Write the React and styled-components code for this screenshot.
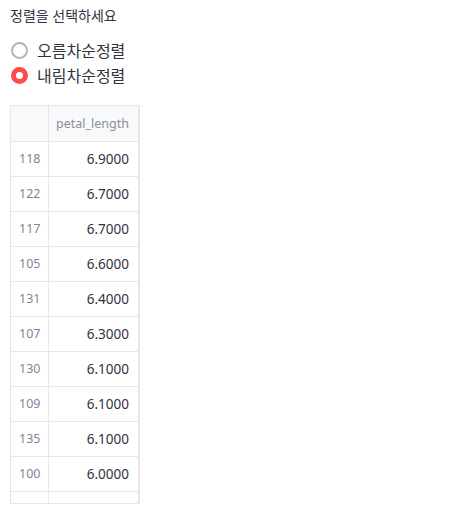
import React, { useState } from 'react';
import styled, { createGlobalStyle } from 'styled-components';

const GlobalStyle = createGlobalStyle`
  html, body {
    margin: 0;
    padding: 0;
    background: #ffffff;
  }
  body {
    font-family: "Noto Sans", "Noto Sans CJK KR", sans-serif;
    color: #31333f;
  }
`;

const data = [
  [118, '6.9000'],
  [122, '6.7000'],
  [117, '6.7000'],
  [105, '6.6000'],
  [131, '6.4000'],
  [107, '6.3000'],
  [130, '6.1000'],
  [109, '6.1000'],
  [135, '6.1000'],
  [100, '6.0000'],
];

const options = ['오름차순정렬', '내림차순정렬'];

const App = () => {
  const [selected, setSelected] = useState(1);

  return (
    <Page>
      <GlobalStyle />
      <Label>정렬을 선택하세요</Label>
      <RadioGroup>
        {options.map((opt, i) => (
          <RadioRow key={opt} onClick={() => setSelected(i)}>
            <RadioCircle checked={selected === i} />
            <RadioText>{opt}</RadioText>
          </RadioRow>
        ))}
      </RadioGroup>
      <TableFrame>
        <Table>
          <thead>
            <tr>
              <HeadCell index />
              <HeadCell>petal_length</HeadCell>
            </tr>
          </thead>
          <tbody>
            {data.map(([idx, val]) => (
              <tr key={idx}>
                <IndexCell>{idx}</IndexCell>
                <ValueCell>{val}</ValueCell>
              </tr>
            ))}
            {/* next row is scrolled out of view */}
            <tr>
              <IndexCell />
              <ValueCell />
            </tr>
          </tbody>
        </Table>
      </TableFrame>
    </Page>
  );
};

const Page = styled.div`
  padding: 6px 10px 10px;
  display: flex;
  flex-direction: column;
`;

const Label = styled.div`
  font-size: 14px;
  line-height: 20px;
  color: #31333f;
`;

const RadioGroup = styled.div`
  display: flex;
  flex-direction: column;
  margin-top: 12px;
  margin-bottom: 17px;
`;

const RadioRow = styled.div`
  display: flex;
  align-items: center;
  height: 25px;
  cursor: pointer;
`;

const RadioCircle = styled.span`
  box-sizing: border-box;
  width: 17px;
  height: 17px;
  border-radius: 50%;
  margin-left: 1px;
  border: ${p => (p.checked ? '5px solid #ff4b4b' : '2px solid #b4b4b8')};
  background: #ffffff;
  flex-shrink: 0;
`;

const RadioText = styled.span`
  margin-left: 9px;
  font-size: 16px;
  line-height: 20px;
  color: #31333f;
`;

const TableFrame = styled.div`
  width: 130px;
  height: 399px;
  overflow: hidden;
  box-sizing: border-box;
  border: 1px solid #e6e7ea;
  border-right: 2px solid #e6e7ea;
`;

const Table = styled.table`
  border-collapse: collapse;
  width: 100%;
  table-layout: fixed;
  font-size: 13.5px;
`;

const HeadCell = styled.th`
  height: 35px;
  background: #f8f9fb;
  color: #8b8e98;
  font-size: 12.5px;
  font-weight: 400;
  text-align: right;
  padding: 0 9px 0 0;
  border-bottom: 1px solid #e6e7ea;
  border-right: ${p => (p.index ? '1px solid #e6e7ea' : 'none')};
  width: ${p => (p.index ? '37px' : 'auto')};
  box-sizing: border-box;
`;

const IndexCell = styled.td`
  height: 34px;
  color: #8a7f9c;
  text-align: left;
  padding: 0 0 0 8px;
  border-bottom: 1px solid #e6e7ea;
  border-right: 1px solid #e6e7ea;
  font-size: 12.5px;
`;

const ValueCell = styled.td`
  height: 34px;
  color: #31333f;
  text-align: right;
  padding: 0 9px 0 0;
  border-bottom: 1px solid #e6e7ea;
`;

export default App;
